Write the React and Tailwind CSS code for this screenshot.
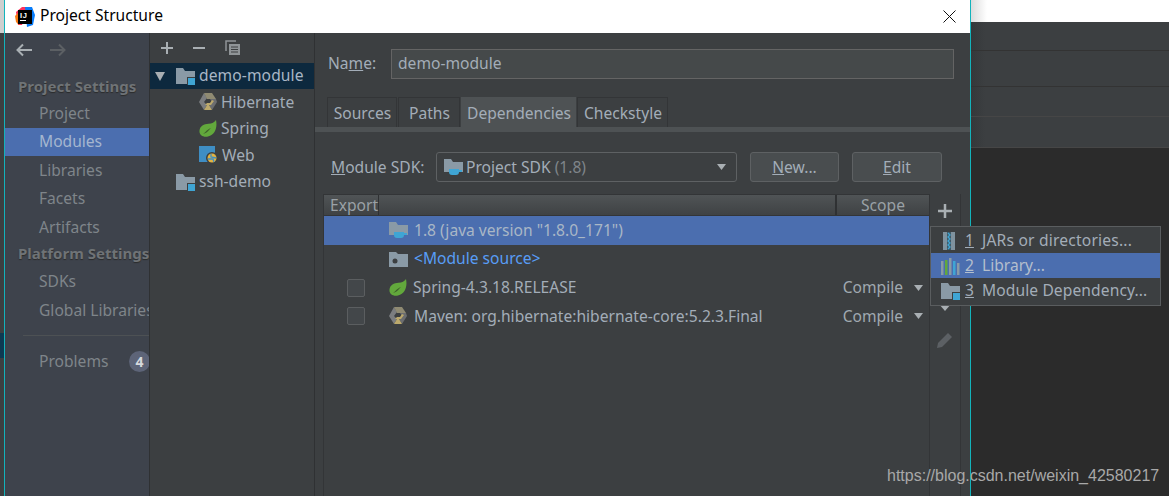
import React from "react";

const FolderShape = ({ fill = "#8a9aa6" }) => (
  <path d="M0 1h7l2 3h10v13H0z" fill={fill} />
);

const ModuleIcon = () => (
  <svg width="19" height="18" viewBox="0 0 19 18" className="shrink-0">
    <FolderShape />
    <rect x="11" y="10" width="8" height="8" fill="#3c3f41" />
    <rect x="12" y="11" width="7" height="7" fill="#3fa5d4" />
  </svg>
);

const SdkIcon = () => (
  <svg width="20" height="18" viewBox="0 0 20 18" className="shrink-0">
    <path d="M0 1h7l2 3h10v10H0z" fill="#8a9aa6" />
    <path d="M5 11h10v3c0 2-1 3-3 3H8c-2 0-3-1-3-3z" fill="#3fa5d4" />
    <path d="M15 12h3v2h-3z" fill="#3fa5d4" />
  </svg>
);

const SourceIcon = () => (
  <svg width="19" height="18" viewBox="0 0 19 18" className="shrink-0">
    <path d="M0 2h7l2 2h10v13H0z" fill="#8a9aa6" />
    <circle cx="6" cy="11" r="2.5" fill="#3c3f41" />
  </svg>
);

const HibernateIcon = () => (
  <svg width="18" height="18" viewBox="0 0 18 18" className="shrink-0">
    <path d="M5 0L0 9l5 8 3-5-3-3 3-4z" fill="#7b7d80" />
    <path d="M5 0h8l4 6H8z" fill="#8f8a72" />
    <path d="M17 6l1 3-5 8-3-5 3-3-2-3z" fill="#6b6d70" />
    <path d="M5 17h8l-3-5H8z" fill="#bca96c" />
    <path d="M6 12h6l3-4-2-1-2 3H8z" fill="#bca96c" />
  </svg>
);

const LeafIcon = () => (
  <svg width="18" height="17" viewBox="0 0 18 17" className="shrink-0">
    <path d="M17 0c1.500 7-.5 15-8 16.500C4 17.500 0 15 .5 10.500 1 6 5 4 9.500 3.800 13 3.600 15.500 2.500 17 0z" fill="#62a83c" />
    <path d="M4 14c2-1 3-4 8-6-3 3-4 5-8 6z" fill="#3d5f2a" />
  </svg>
);

const WebIcon = () => (
  <svg width="19" height="18" viewBox="0 0 19 18" className="shrink-0">
    <rect x="0" y="0" width="16" height="16" fill="#3f8ec4" />
    <circle cx="13" cy="12" r="6" fill="#3c3f41" />
    <circle cx="13" cy="12" r="4.500" fill="#e3b341" />
    <path d="M9 13h5l1 3M12 8v3l5 1" stroke="#3f8ec4" strokeWidth="1.300" fill="none" />
  </svg>
);

const JarIcon = () => (
  <svg width="19" height="18" viewBox="0 0 19 18" className="shrink-0">
    <rect x="2" y="0" width="4" height="18" fill="#7f929e" />
    <rect x="10" y="0" width="4" height="18" fill="#7f929e" />
    <rect x="6" y="0" width="4" height="18" fill="#3f5a68" />
    <path d="M7 1l2 2-2 2 2 2-2 2 2 2-2 2 2 2-2 2" stroke="#3fa5d4" strokeWidth="1.300" fill="none" />
  </svg>
);

const LibraryIcon = () => (
  <svg width="19" height="18" viewBox="0 0 19 18" className="shrink-0">
    <rect x="0" y="4" width="2.500" height="14" fill="#8a9aa6" />
    <rect x="4" y="3" width="2.500" height="15" fill="#62a83c" />
    <rect x="8" y="1" width="2.500" height="17" fill="#8a9aa6" />
    <rect x="12" y="4" width="2.500" height="14" fill="#3fa5d4" />
    <rect x="16" y="6" width="2.500" height="12" fill="#8a9aa6" />
  </svg>
);

const Caret = () => (
  <svg width="9" height="6" viewBox="0 0 9 6" className="shrink-0">
    <path d="M0 0h9L4.500 6z" fill="#a9afb3" />
  </svg>
);

const Settings = ({ title, items, top }) => (
  <>
    <div className={`pl-[13px] text-[15px] font-bold text-[#6f7376] whitespace-nowrap [text-shadow:0_1px_1px_#2b2b2b] ${top}`}>{title}</div>
    {items.map((item) => (
      <div
        key={item}
        className={`h-[28.5px] pl-[34px] flex items-center whitespace-nowrap ${item === "Modules" ? "bg-[#4b6eaf] text-[#a5b6cf]" : "text-[#7f858a]"}`}
      >
        {item}
      </div>
    ))}
  </>
);

const Sidebar = () => (
  <div className="w-[145px] shrink-0 bg-[#3e434c] overflow-hidden border-r border-[#2f3133] flex flex-col">
    <div className="h-[33px] flex items-center pl-[10px] gap-[16px]">
      <svg width="18" height="14" viewBox="0 0 18 14">
        <path d="M17 7H3M8 1.500L2.500 7 8 12.500" stroke="#a9afb3" strokeWidth="2" fill="none" />
      </svg>
      <svg width="18" height="14" viewBox="0 0 18 14">
        <path d="M1 7h14M10 1.500L15.500 7 10 12.500" stroke="#5c6064" strokeWidth="2" fill="none" />
      </svg>
    </div>
    <Settings title="Project Settings" top="mt-[9px] h-[24px] leading-[22px]" items={["Project", "Modules", "Libraries", "Facets", "Artifacts"]} />
    <Settings title="Platform Settings" top="h-[26px] leading-[22px]" items={["SDKs", "Global Libraries"]} />
    <div className="mt-[10px] ml-[18px] h-px bg-[#4d5154]" />
    <div className="mt-[12px] h-[28px] pl-[34px] flex items-center justify-between text-[#7f858a]">
      <span>Problems</span>
      <span className="w-[21px] h-[21px] -mr-[1px] shrink-0 rounded-full bg-[#5d6478] text-[#d5d8dc] font-bold text-[14px] flex items-center justify-center">4</span>
    </div>
  </div>
);

const treeChildren = [
  { name: "Hibernate", icon: <HibernateIcon /> },
  { name: "Spring", icon: <LeafIcon /> },
  { name: "Web", icon: <WebIcon /> },
];

const Tree = () => (
  <div className="w-[165px] shrink-0 bg-[#3c3f41] border-r border-[#2f3133] flex flex-col">
    <div className="h-[30px] flex items-center pl-[10px] gap-[18px] pb-[1px]">
      <svg width="14" height="14" viewBox="0 0 14 14"><path d="M7 1v12M1 7h12" stroke="#a9afb3" strokeWidth="2" /></svg>
      <svg width="14" height="14" viewBox="0 0 14 14"><path d="M1 7h12" stroke="#a9afb3" strokeWidth="2" /></svg>
      <svg width="16" height="16" viewBox="0 0 16 16" className="ml-[1px]">
        <path d="M1 11V1h10" stroke="#8f9497" strokeWidth="1.500" fill="none" />
        <rect x="4" y="4" width="11" height="11" fill="#8f9497" />
        <path d="M6 7h7M6 9.500h7M6 12h7" stroke="#3c3f41" />
      </svg>
    </div>
    <div className="h-[26px] bg-[#0d293e] flex items-center pl-[5px] text-[#a9b7c6]">
      <svg width="10" height="9" viewBox="0 0 10 9" className="shrink-0"><path d="M0 0h10L5 9z" fill="#a9afb3" /></svg>
      <span className="ml-[11px]"><ModuleIcon /></span>
      <span className="ml-[4px] tracking-[0.1px]">demo-module</span>
    </div>
    {treeChildren.map((c) => (
      <div key={c.name} className="h-[26.5px] flex items-center pl-[49px] gap-[4px] text-[#a3adb8]">
        {c.icon}
        <span>{c.name}</span>
      </div>
    ))}
    <div className="h-[26.5px] flex items-center pl-[26px] gap-[4px] text-[#a3adb8]">
      <ModuleIcon />
      <span>ssh-demo</span>
    </div>
  </div>
);

const tabs = [
  { name: "Sources", w: "w-[70px]" },
  { name: "Paths", w: "w-[62px]" },
  { name: "Dependencies", w: "w-[115px]", active: true },
  { name: "Checkstyle", w: "w-[91px]" },
];

const Row = ({ check, icon, children, scope, selected, gap = "gap-[5px]" }) => (
  <div className={`h-[28.7px] flex items-center ${selected ? "bg-[#4b6eaf]" : ""}`}>
    <div className="w-[65px] shrink-0 flex justify-center">
      {check && <span className="w-[18px] h-[18px] ml-[-1px] rounded-[2px] border border-[#5b5e60] bg-[#43474a]" />}
    </div>
    <span className={`flex items-center ${gap}`}>{icon}<span>{children}</span></span>
    {scope && (
      <span className="ml-auto mr-[6px] flex items-center gap-[11px] text-[#a0a9b0]">
        <span>{scope}</span>
        <Caret />
      </span>
    )}
  </div>
);

const Menu = () => (
  <div className="absolute left-[930px] top-[226px] w-[231px] h-[80px] bg-[#3c3f41] border border-[#5a5d5f] flex flex-col text-[#a3adb8] z-10">
    <div className="h-[26px] flex items-center pl-[10px] pt-[1px]">
      <JarIcon />
      <u className="ml-[5px] w-[17px]">1</u>
      <span className="tracking-[0.2px]">JARs or directories...</span>
    </div>
    <div className="h-[25px] flex items-center pl-[10px] bg-[#4b6eaf] text-[#b4bfcd]">
      <LibraryIcon />
      <u className="ml-[5px] w-[17px]">2</u>
      <span>Library...</span>
    </div>
    <div className="h-[26px] flex items-center pl-[10px]">
      <ModuleIcon />
      <u className="ml-[5px] w-[17px]">3</u>
      <span className="tracking-[0.1px]">Module Dependency...</span>
    </div>
  </div>
);

const Content = () => (
  <div className="flex-1 min-w-0 bg-[#3c3f41] flex flex-col text-[#a3adb8]">
    <div className="h-[30px] mt-[16px] flex items-center pl-[13px] pr-[16px]">
      <span className="w-[63px]">Na<u>m</u>e:</span>
      <div className="flex-1 h-[30px] px-[6px] bg-[#45494a] border border-[#646464] flex items-center">demo-module</div>
    </div>
    <div className="mt-[18px] flex pl-[12px] gap-px h-[30px]">
      {tabs.map((t) => (
        <div
          key={t.name}
          className={`${t.w} pt-[3px] pl-[1px] flex items-center justify-center border border-b-0 ${t.active ? "bg-[#4e5254] border-[#4e5254]" : "border-[#333537]"}`}
        >
          {t.name}
        </div>
      ))}
    </div>
    <div className="h-[5px] bg-[#4e5254]" />
    <div className="mt-[20px] h-[30px] flex items-center pl-[16px]">
      <span className="w-[105px] pt-[2px]"><u>M</u>odule SDK:</span>
      <div className="w-[301px] h-[30px] rounded-[3px] border border-[#5e6163] bg-[#3c3f41] flex items-center pl-[7px] pr-[10px] gap-[2px]">
        <SdkIcon />
        <span className="pt-[2px]">Project SDK <span className="text-[#7f858a]">(1.8)</span></span>
        <span className="ml-auto"><Caret /></span>
      </div>
      <div className="ml-[13px] w-[89px] h-[30px] rounded-[3px] border border-[#5e6163] bg-[#494d4f] flex items-center justify-center pt-[2px]"><span><u>N</u>ew...</span></div>
      <div className="ml-[13px] w-[90px] h-[30px] rounded-[3px] border border-[#5e6163] bg-[#494d4f] flex items-center justify-center pt-[2px]"><span><u>E</u>dit</span></div>
    </div>
    <div className="mt-[12px] ml-[8px] mr-[9px] flex-1 min-h-0 flex border-l border-r border-[#333537]">
      <div className="flex-1 min-w-0 flex flex-col">
        <div className="h-[22px] flex bg-gradient-to-b from-[#505456] to-[#3f4244] border-t border-b border-[#333537] text-[#9aa1a6]">
          <div className="w-[55px] pl-[6px] border-r border-[#2f3133] leading-[20px]">Export</div>
          <div className="flex-1" />
          <div className="w-[94px] border-l-2 border-[#2f3133] text-center leading-[20px]">Scope</div>
        </div>
        <Row selected icon={<SdkIcon />}><span className="text-[#a9b7c6]">1.8 (java version "1.8.0_171")</span></Row>
        <Row icon={<SourceIcon />} gap="gap-[6px]"><span className="text-[#589df6]">&lt;Module source&gt;</span></Row>
        <Row check icon={<LeafIcon />} scope="Compile" gap="gap-[6px]">Spring-4.3.18.RELEASE</Row>
        <Row check icon={<HibernateIcon />} scope="Compile" gap="gap-[7px]">Maven: org.hibernate:hibernate-core:5.2.3.Final</Row>
      </div>
      <div className="w-[31px] shrink-0 border-l border-[#333537] flex flex-col items-center">
        <svg width="14" height="14" viewBox="0 0 14 14" className="mt-[10px]"><path d="M7 0v14M0 7h14" stroke="#a9afb3" strokeWidth="2.500" /></svg>
        <svg width="12" height="8" viewBox="0 0 12 8" className="mt-[86px]"><path d="M0 0h12L6 7z" fill="#a9afb3" /></svg>
        <svg width="18" height="18" viewBox="0 0 18 18" className="mt-[19px]">
          <path d="M1 17l1-5L12 2l4 4L6 16z" fill="#5c6064" />
        </svg>
      </div>
    </div>
  </div>
);

export default function App() {
  return (
    <div className="relative w-[1169px] h-[496px] overflow-hidden flex bg-[#2b2b2b] text-[15.6px] font-['Noto_Sans','Open_Sans',sans-serif]">
      <div className="w-[4px] shrink-0 flex flex-col bg-[#3c3f41]">
        <div className="h-[33px] bg-[#cfcfcf]" />
        <div className="h-[300px]" />
        <div className="h-[25px] bg-[#0d3a52]" />
      </div>
      <div className="w-[967px] shrink-0 flex flex-col border-x border-[#13b3bb]">
        <div className="h-[33px] shrink-0 bg-white flex items-center pl-[10px] text-black">
          <svg width="20" height="20" viewBox="0 0 20 20" className="shrink-0">
            <path d="M1 5l6-5h6l-6 18H3z" fill="#fe315d" />
            <path d="M10 0h7l3 8-2 10-6 2z" fill="#087cfa" />
            <path d="M0 9l3-3 4 5-3 7-3-3z" fill="#f97a12" />
            <rect x="3" y="3" width="14" height="14" fill="#000" />
            <text x="5" y="10.500" fill="#fff" fontSize="7.500" fontWeight="700" letterSpacing="0.6" fontFamily="Liberation Sans">IJ</text>
            <rect x="5" y="13" width="6" height="1" fill="#fff" />
          </svg>
          <span className="ml-[5px] pb-[1px]">Project Structure</span>
          <svg width="13" height="13" viewBox="0 0 13 13" className="ml-auto mr-[14px]">
            <path d="M.5.500l12 12M12.500.500l-12 12" stroke="#111" strokeWidth="1" />
          </svg>
        </div>
        <div className="flex-1 min-h-0 flex">
          <Sidebar />
          <Tree />
          <Content />
        </div>
      </div>
      <div className="flex-1 min-w-0 flex flex-col">
        <div className="h-[22px] bg-[linear-gradient(90deg,#dcdcdc,#fff_16px)]" />
        <div className="h-[29px] bg-[linear-gradient(90deg,#35383a,#3c3f41_14px)] border-b border-[#333333]" />
        <div className="h-[36px] bg-[linear-gradient(90deg,#35383a,#3c3f41_14px)] border-b border-[#333333]" />
        <div className="h-[30px] bg-[linear-gradient(90deg,#35383a,#3c3f41_14px)] border-b border-[#464646]" />
        <div className="h-[31px] bg-[linear-gradient(90deg,#35383a,#3c3f41_14px)] border-b border-[#464646]" />
        <div className="flex-1" />
      </div>
      <Menu />
      <div className="absolute left-[887px] top-[467px] text-[16px] leading-[18px] text-[#a8a8a8] font-['Liberation_Sans',sans-serif] z-20">https://blog.csdn.net/weixin_42580217</div>
    </div>
  );
}
